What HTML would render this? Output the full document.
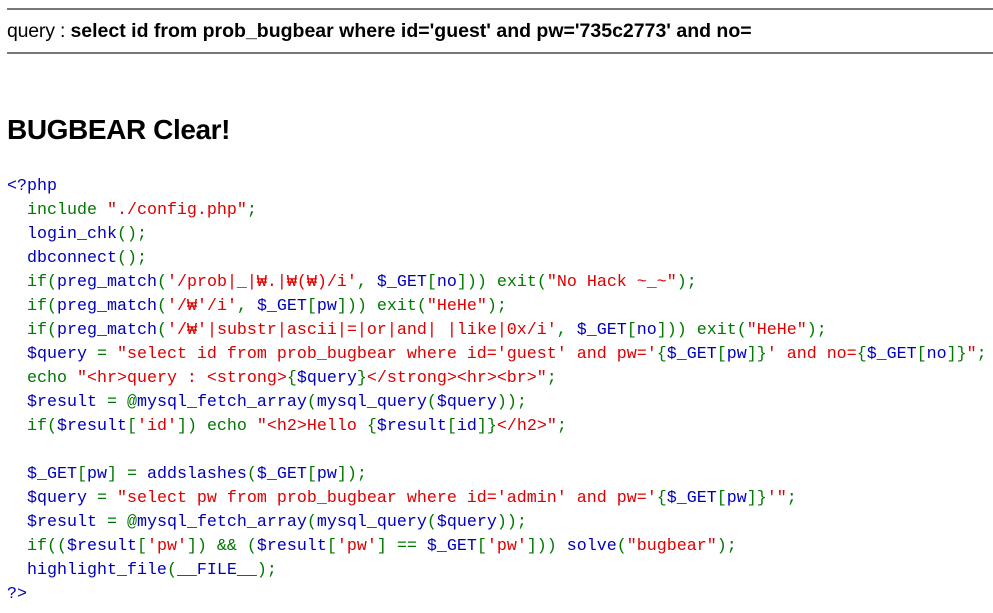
<!DOCTYPE html>
<html><head><meta charset="utf-8"><style>
body{margin:0;background:#fff;font-family:"Liberation Sans",sans-serif;color:#000;}
.hr{position:absolute;left:7px;right:0;height:0;border-top:2px solid #777;}
.q{position:absolute;left:7px;top:20px;font-size:19.5px;white-space:nowrap;letter-spacing:-0.2px;}
.q b{font-weight:bold;letter-spacing:0}
h2{position:absolute;left:7px;top:114px;margin:0;font-size:28px;font-weight:bold;letter-spacing:-0.4px;}
pre{position:absolute;left:7px;top:175px;margin:0;font-family:"Liberation Mono",monospace;font-size:16.67px;line-height:24px;color:#0000BB;}
.g{color:#007700}.r{color:#DD0000}.b{color:#0000BB}
</style></head><body>
<div class="hr" style="top:8px"></div>
<div class="q">query : <b>select id from prob_bugbear where id='guest' and pw='735c2773' and no=</b></div>
<div class="hr" style="top:52px"></div>
<h2>BUGBEAR Clear!</h2>
<pre><span class="b">&lt;?php</span>
  <span class="g">include </span><span class="r">"./config.php"</span><span class="g">;</span>
  login_chk<span class="g">();</span>
  dbconnect<span class="g">();</span>
  <span class="g">if(</span>preg_match<span class="g">(</span><span class="r">'/prob|_|₩.|₩(₩)/i'</span><span class="g">, </span>$_GET<span class="g">[</span>no<span class="g">])) exit(</span><span class="r">"No Hack ~_~"</span><span class="g">);</span>
  <span class="g">if(</span>preg_match<span class="g">(</span><span class="r">'/₩'/i'</span><span class="g">, </span>$_GET<span class="g">[</span>pw<span class="g">])) exit(</span><span class="r">"HeHe"</span><span class="g">);</span>
  <span class="g">if(</span>preg_match<span class="g">(</span><span class="r">'/₩'|substr|ascii|=|or|and| |like|0x/i'</span><span class="g">, </span>$_GET<span class="g">[</span>no<span class="g">])) exit(</span><span class="r">"HeHe"</span><span class="g">);</span>
  $query <span class="g">= </span><span class="r">"select id from prob_bugbear where id='guest' and pw='</span><span class="g">{</span>$_GET<span class="g">[</span>pw<span class="g">]}</span><span class="r">' and no=</span><span class="g">{</span>$_GET<span class="g">[</span>no<span class="g">]}</span><span class="r">"</span><span class="g">;</span>
  <span class="g">echo </span><span class="r">"&lt;hr&gt;query : &lt;strong&gt;</span><span class="g">{</span>$query<span class="g">}</span><span class="r">&lt;/strong&gt;&lt;hr&gt;&lt;br&gt;"</span><span class="g">;</span>
  $result <span class="g">= @</span>mysql_fetch_array<span class="g">(</span>mysql_query<span class="g">(</span>$query<span class="g">));</span>
  <span class="g">if(</span>$result<span class="g">[</span><span class="r">'id'</span><span class="g">]) echo </span><span class="r">"&lt;h2&gt;Hello </span><span class="g">{</span>$result<span class="g">[</span>id<span class="g">]}</span><span class="r">&lt;/h2&gt;"</span><span class="g">;</span>

  $_GET<span class="g">[</span>pw<span class="g">] = </span>addslashes<span class="g">(</span>$_GET<span class="g">[</span>pw<span class="g">]);</span>
  $query <span class="g">= </span><span class="r">"select pw from prob_bugbear where id='admin' and pw='</span><span class="g">{</span>$_GET<span class="g">[</span>pw<span class="g">]}</span><span class="r">'"</span><span class="g">;</span>
  $result <span class="g">= @</span>mysql_fetch_array<span class="g">(</span>mysql_query<span class="g">(</span>$query<span class="g">));</span>
  <span class="g">if((</span>$result<span class="g">[</span><span class="r">'pw'</span><span class="g">]) &amp;&amp; (</span>$result<span class="g">[</span><span class="r">'pw'</span><span class="g">] == </span>$_GET<span class="g">[</span><span class="r">'pw'</span><span class="g">])) </span>solve<span class="g">(</span><span class="r">"bugbear"</span><span class="g">);</span>
  highlight_file<span class="g">(</span>__FILE__<span class="g">);</span>
<span class="b">?&gt;</span></pre>
</body></html>
